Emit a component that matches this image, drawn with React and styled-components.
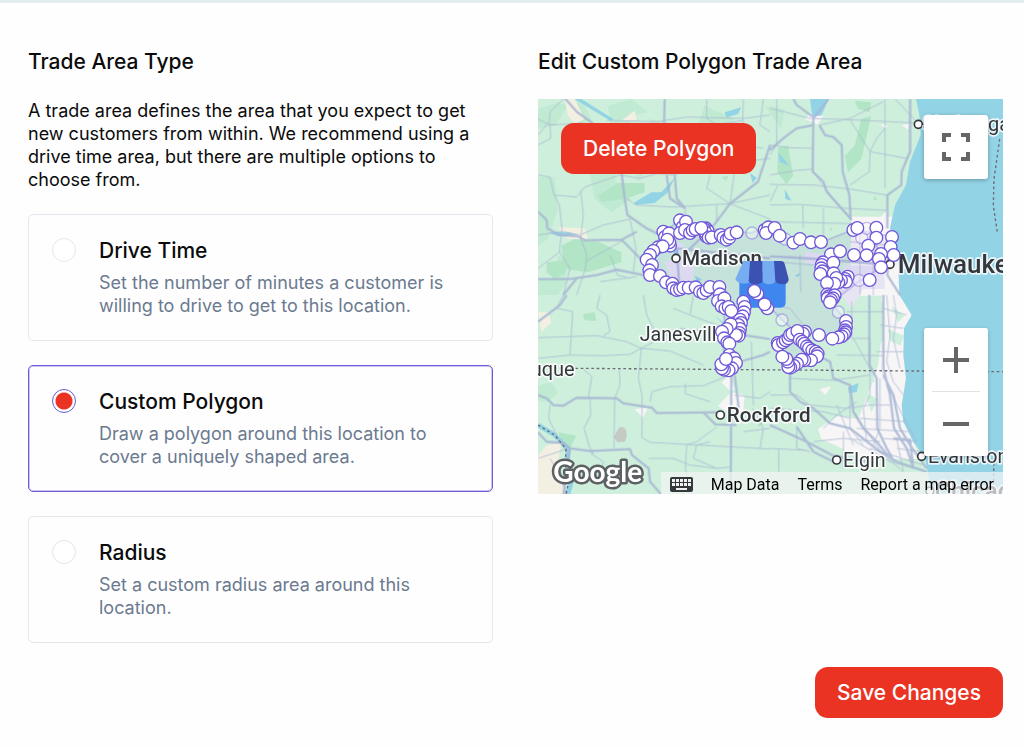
import React, { useState } from "react";
import styled, { createGlobalStyle } from "styled-components";

const GlobalStyle = createGlobalStyle`
  *, *::before, *::after { box-sizing: border-box; }
  body {
    margin: 0;
    background: #fefefe;
    color: #0b0b0c;
    font-family: Inter, "Open Sans", sans-serif;
  }
  button, input { font: inherit; }
`;

const Page = styled.main`
  border-top: 3px solid #e4edf0;
  padding: 44px 21px 30px 28px;
`;

const Columns = styled.div`
  display: grid;
  grid-template-columns: 1fr 1fr;
  gap: 45px;
`;

const Column = styled.section`
  min-width: 0;
`;

const Heading = styled.h2`
  margin: 0 0 22px;
  font-size: 21px;
  font-weight: 500;
  line-height: 30px;
`;

const Intro = styled.p`
  margin: 0 0 23px;
  font-size: 18px;
  line-height: 23px;
`;

const Options = styled.div`
  display: flex;
  flex-direction: column;
  gap: 24px;
`;

const OptionCard = styled.label`
  display: flex;
  align-items: flex-start;
  gap: 23px;
  padding: 23px;
  border: 1px solid ${(p) => (p.$selected ? "#6f5bd6" : "#e3e8ef")};
  box-shadow: ${(p) => (p.$selected ? "inset 0 0 0 1px #cdc5f1" : "none")};
  border-radius: 5px;
  cursor: pointer;
`;

const Radio = styled.input`
  appearance: none;
  flex: none;
  width: 24px;
  height: 24px;
  margin: 0;
  border: 1px solid #e3e8ef;
  border-radius: 50%;
  background: #fff;
  &:checked {
    border-color: #6f5bd6;
    background: radial-gradient(circle, #ea3323 0 8px, #fff 9px);
  }
`;

const OptionBody = styled.span`
  display: block;
`;

const OptionTitle = styled.span`
  display: block;
  margin-bottom: 7px;
  font-size: 21px;
  font-weight: 500;
  line-height: 26px;
`;

const OptionText = styled.span`
  display: block;
  color: #6b7a90;
  font-size: 18px;
  line-height: 23px;
`;

const Button = styled.button`
  height: 51px;
  padding: 0 22px;
  border: 0;
  border-radius: 13px;
  background: #ea3323;
  color: #fff;
  font-size: 21px;
  font-weight: 500;
  cursor: pointer;
`;

const Actions = styled.div`
  display: flex;
  justify-content: flex-end;
  margin-top: 24px;
`;

const MapFrame = styled.div`
  position: relative;
  height: 395px;
  overflow: hidden;
  background: #ceefdc;
  font-family: Roboto, sans-serif;
`;

const MapSvg = styled.svg`
  display: block;
  width: 100%;
  height: 100%;
`;

const DeleteSlot = styled.div`
  position: absolute;
  top: 24px;
  left: 23px;
  font-family: Inter, "Open Sans", sans-serif;
`;

const MapControl = styled.button`
  display: grid;
  place-items: center;
  width: 64px;
  height: 64px;
  padding: 0;
  border: 0;
  border-radius: 3px;
  background: #fff;
  cursor: pointer;
`;

const FullscreenSlot = styled.div`
  position: absolute;
  top: 16px;
  right: 15px;
  border-radius: 3px;
  box-shadow: 0 1px 4px rgba(0, 0, 0, 0.3);
`;

const ZoomSlot = styled.div`
  position: absolute;
  right: 15px;
  bottom: 38px;
  border-radius: 3px;
  background: #fff;
  box-shadow: 0 1px 4px rgba(0, 0, 0, 0.2);
`;

const Divider = styled.div`
  height: 1px;
  margin: -1px 8px 0;
  background: #e2e2e2;
`;

const MapFooter = styled.div`
  position: absolute;
  right: 0;
  bottom: 0;
  display: flex;
  align-items: center;
  height: 22px;
  padding-top: 2px;
  background: rgba(245, 245, 245, 0.7);
  color: #000;
  font-size: 16px;
`;

const FooterButton = styled.button`
  display: flex;
  align-items: center;
  height: 20px;
  padding: 0 9px;
  border: 0;
  background: none;
  color: inherit;
  white-space: nowrap;
  cursor: pointer;
`;

const FooterLink = styled.a`
  padding: 0 9px;
  color: inherit;
  text-decoration: none;
  white-space: nowrap;
`;

const options = [
  {
    id: "drive",
    title: "Drive Time",
    text: "Set the number of minutes a customer is willing to drive to get to this location.",
  },
  {
    id: "polygon",
    title: "Custom Polygon",
    text: "Draw a polygon around this location to cover a uniquely shaped area.",
  },
  {
    id: "radius",
    title: "Radius",
    text: "Set a custom radius area around this location.",
  },
];

/* Polygon vertices, west part, as map units from (276, 318). */
const westVertices = [
  [228, 70], [233, 78], [226, 86], [229, 94], [100, 80], [105, 96], [117, 85],
  [120, 122], [118, 112], [112, 104], [150, 46], [158, 66], [168, 50], [150, 84],
  [165, 75], [180, 84], [188, 76], [197, 72], [222, 72], [226, 82], [214, 69], [236, 98], [245, 97],
  [272, 90], [280, 98], [290, 104], [298, 98], [302, 86], [320, 82],
  [84, 127], [98, 124], [70, 138], [60, 150], [50, 164], [66, 180], [58, 196],
  [60, 210], [90, 213], [108, 232], [127, 236], [130, 250], [140, 255], [150, 253],
  [160, 248], [176, 248], [197, 247], [210, 260], [220, 264], [230, 256],
  [240, 246], [268, 246], [270, 268], [264, 288], [283, 280], [275, 304],
  [286, 310], [296, 306], [304, 318], [372, 258], [382, 266], [340, 290],
  [344, 306], [412, 310], [404, 298], [342, 322], [338, 334], [330, 344],
  [333, 354], [325, 360], [330, 372], [328, 384], [326, 392], [318, 390],
  [302, 358], [290, 372], [276, 380], [282, 400], [292, 412], [298, 416],
  [298, 450], [312, 460], [318, 474], [306, 490], [296, 496], [282, 494],
  [276, 490], [274, 478], [288, 462],
  [373, 258], [404, 75], [415, 67], [408, 84], [434, 69], [449, 92],
];

/* East part, as map units from (681, 318). */
const eastVertices = [
  [85, 113], [105, 102], [138, 112], [168, 111], [265, 75], [277, 69],
  [334, 68], [334, 98], [381, 96], [377, 126], [310, 122], [305, 151],
  [267, 150], [198, 148], [225, 139], [386, 150], [348, 147], [342, 162],
  [348, 187], [314, 225], [174, 172], [170, 180], [169, 190], [172, 199],
  [205, 173], [166, 207], [206, 205], [248, 215], [240, 222], [243, 230],
  [228, 226], [220, 232], [214, 219], [208, 236], [186, 234],
  [187, 268], [191, 274], [188, 280], [209, 271], [204, 280], [198, 285],
  [195, 292], [243, 348], [243, 366], [240, 376], [241, 382], [237, 388],
  [230, 394], [220, 397], [202, 401], [162, 390], [38, 414], [40, 420],
  [54, 412], [62, 406], [70, 400], [75, 390], [82, 386], [120, 380],
  [114, 386], [97, 378], [104, 404], [112, 410], [118, 416], [126, 424],
  [132, 430], [142, 436], [152, 440], [158, 446], [156, 454], [138, 466],
  [118, 466], [110, 464], [96, 476], [86, 482], [76, 488], [70, 486],
  [68, 470], [64, 462], [52, 455],
];

const ghostVertices = [[366, 84, 276], [456, 345, 276], [220, 321, 681], [282, 226, 681], [290, 98, 681], [305, 70, 681], [60, 102, 681]];

const Vertex = ({ x, y }) => (
  <circle cx={x} cy={y} r="19" fill="#fff" stroke="#6f57d8" strokeWidth="4" />
);

const roadsMinor = {
  nw: "M24 120L58 80 60 50 100 12M0 60L60 90 160 84M60 84L62 130 24 150M230 76L380 80 470 66 640 70 720 60M530 12V70L560 90 640 76M640 12L636 150 700 160M24 240L60 246 72 300 88 330 96 400 88 470 120 520 100 600M72 300L140 306 164 276 270 240 330 250M152 285L160 360 152 430 170 480 166 520 140 600M24 420L100 410 150 420 220 390 300 372M90 470L24 520M330 250L380 236 440 240M288 310L320 330 430 336 600 326 720 300M430 240L470 180 510 160 530 90M540 240L530 280 600 326M600 326L612 240 640 200 720 190M600 326L720 372M300 372L318 460 310 530M166 500L280 436M466 340L464 400M240 480L262 540 300 550M210 560L320 545M560 380L560 330M700 12L690 90 720 110",
  ne: "M0 40L120 70 240 74 440 84M20 12V150L0 180M0 150L60 158 130 160M150 90L240 70 340 20M345 12V280M240 74L300 170 410 190M340 100L345 100 320 130 300 170 298 230 240 270M130 222L80 226 0 240M0 268L130 270 240 282 350 300M24 270L0 320M130 230L180 300 245 375M0 330L90 328 230 340 350 346M98 330L100 400M160 340V440M375 12L440 80M0 380L250 386M240 440L350 450M180 470L240 480 350 500M90 480L92 590M10 500L130 510M270 400V600M310 390V600",
  sw: "M100 0L80 40 128 50 120 178M24 128L200 122 290 140 334 160M210 0L200 40 230 60 240 110 220 122M340 0L350 60 380 120M334 160L450 100 540 110M334 160L300 178 220 182 120 180 24 190M334 160L420 168 520 210M334 160L325 250 336 300V430M268 224L270 270 254 310 252 460M160 222L185 245 175 310M180 310L182 360 162 400 186 480M60 330L56 370 80 420 110 470M360 320L366 290 420 275 520 272 600 240M466 265V296L540 320M560 396L500 440 470 450 466 520 480 600M340 430L360 442 720 462M356 490L430 490 480 510 560 520M186 462L190 480 220 500 215 540 260 580M110 462L24 490M664 140L670 330M614 300L690 310 720 290M540 440L500 450 490 490 560 520 600 516M490 0L480 60 560 90M430 40L480 60M668 340L700 400 690 460M720 400L640 410M60 490L90 540",
  se: "M0 30L60 40 100 90M245 20V130L300 130M230 50L340 50M250 130L300 220M200 180L340 182M60 250L190 256 300 240M0 300L80 300 120 330 230 340 300 330 360 330M0 340L160 350 240 370M80 395V460L120 470M26 460V530M0 460L110 466M130 440L220 430 330 440M160 400L200 360 260 320M220 410L220 520M300 140L300 300 280 340 290 440M240 290L240 400 280 450M270 370L410 380M260 400L420 410M330 250V400L310 450M350 0L360 120 350 200 370 260 400 300M370 0L380 60 370 130 390 220M330 90L400 100M340 40L410 60M320 170L400 170M380 430L400 530M340 430L440 440M380 460L450 470M250 350L340 480 400 530M200 330L250 450M240 430L360 500 470 530M300 460L460 510M350 270L440 440",
};

const roadsMajor = {
  nw: "M96 0L140 50 190 86M404 12L402 90M24 350L50 375 52 400 90 420 145 424 165 436 275 434 320 410M275 236L284 310 292 360 350 400 390 420M410 240L420 310 466 340M434 240L440 310 466 340M720 150L684 260 600 326 548 395 470 470M24 552L120 552 200 540 260 524 340 540M140 550L100 600M275 434L340 500 350 540M440 460L720 490M440 460L450 600",
  ne: "M70 12L80 30 130 66M175 12L130 70M130 70L128 230 160 260 170 290 245 375M148 90L165 120 190 126 215 150 218 230 238 300 242 375M130 90L80 100 40 130 0 165M420 12L420 170 395 230 394 270 352 300V400M0 484L80 488 170 494 370 510M300 400L330 480M360 420L352 540 390 600",
  sw: "M110 0L90 30 24 80M24 300L50 310 70 330 100 332 140 308 260 310 280 325 366 338 380 354 560 352M520 352L556 388 620 390M604 220L602 600M614 240L626 340M24 412L50 440 100 444 120 460 180 468 300 462 306 480 356 520 360 560 395 600M640 120L720 132M604 240L630 200 700 180 720 170M120 460L100 600M80 500L110 600",
  se: "M60 240V290L90 320 130 340 180 385 240 400 330 470 380 500 470 530M0 390L110 440 185 480 290 500M80 395L130 470 190 500M120 170L180 200 190 250 240 270 250 350 280 400 320 440 360 490M298 0V210L320 250 322 400 350 460 372 500M340 0V220L360 300 372 400 410 460 430 520M340 240L370 300 390 400 420 450 470 520M370 430L420 434 430 520",
};

const patches = "M0 30L60 10 90 20 50 80 0 90ZM150 200L250 190 230 240 280 300 220 340 170 300ZM90 0L130 0 160 60 130 90ZM0 235L50 235 60 330 30 420 0 440ZM210 20L280 0 330 40 280 50 260 110 220 90ZM500 20L590 60 560 110 480 80ZM280 190L340 200 300 250ZM60 470L90 480 80 560 40 550ZM330 60L450 80 470 190 400 210ZM0 540L90 545 60 588 0 588ZM680 20L740 30 730 90ZM0 860L40 850 60 880 30 910 0 905Z";
const woods = "M180 290L240 252 320 252 320 280 260 300 190 308ZM70 440L110 420 180 428 250 460 250 490 150 520 80 510ZM26 490L80 484 84 520 50 540 25 520ZM720 145L750 140 766 230 745 255 718 220ZM970 60L1000 50 970 180 930 220 920 170 950 140ZM950 5L1000 10 994 40 960 30ZM550 235L570 230 566 245ZM1010 290L1018 302H1005ZM875 385L885 390 878 396ZM135 645L170 640 175 666 140 664ZM1050 770L1090 780 1060 815ZM940 725L970 735 960 750 935 740ZM60 1000L115 1010 90 1060ZM660 930L700 960 660 985ZM905 970L940 990 915 1035 900 1000Z";
const sand = "M80 0L110 0 140 60 110 74 90 50ZM250 65L290 35 296 62 260 66ZM60 385L140 388 150 420 90 420ZM0 640L30 640 40 670 10 700ZM24 1040L70 1030 60 1090 84 1185H0V1070Z";
const water = "M290 310L340 280 370 280 410 236 390 280 350 312 290 318ZM560 40L610 25 600 45 565 55ZM636 222L656 236 644 252ZM130 0L226 60 218 66 110 0ZM816 0H872L850 50 822 50ZM720 160L755 200 726 190ZM740 270L760 305 742 300ZM930 865L962 852 956 880 932 882ZM30 400H90L120 408 60 412ZM410 440L420 450 424 480 405 460ZM470 530L490 540 480 560ZM770 530L790 520 780 534ZM530 650L570 680 550 670Z";
const urban = "M940 353H1030L1050 330V353H1076V448L1090 588 1121 648 1100 700 1104 838 1096 968 1150 1080H980L850 1020 840 990 900 950 960 960 1000 860 1020 800 1030 720V590H936ZM800 60L830 30 856 50 840 76ZM1028 75L1050 80 1040 90ZM1090 78L1116 75 1110 92ZM575 830L590 870 580 880 550 850ZM580 878L620 890 616 940 560 935 540 920ZM290 930L330 926 315 956ZM845 870L880 862 862 888Z";
const parks = "M940 610H1035V720H940ZM936 715L990 740 1010 850 930 840ZM1050 690L1098 710 1088 740 1056 725ZM1060 620L1100 650 1080 670ZM1000 640L1040 720 1000 760ZM980 880L1020 900 1000 940ZM940 1060L980 1080 930 1100Z";
const murk = "M430 470L470 490 460 570 400 540 380 490ZM400 420L440 440 420 470ZM800 458L880 470 850 500 800 490ZM920 500H1040V570H900ZM900 570L980 560 940 630Z";
const tradeArea = "M384 400L420 364 500 388 640 402 680 385 770 428 850 430 950 390 1055 412 1066 470 1030 505 960 550 880 610 924 666 900 712 843 708 800 700 735 732 735 770 765 803 830 765 790 715 732 662 648 576 600 660 580 740 560 800 556 740 560 620 500 565 390 550 336 520 330 480Z";

const Label = ({ x, y, size, weight = 500, anchor = "start", children }) => (
  <text
    x={x}
    y={y}
    fontSize={size}
    fontWeight={weight}
    textAnchor={anchor}
    fill="#35373c"
    stroke="#fff"
    strokeWidth="10"
    strokeLinejoin="round"
    strokeOpacity="0.8"
    paintOrder="stroke"
  >
    {children}
  </text>
);

const Roads = ({ d, ...rest }) => (
  <g fill="none" stroke="#a7b6d3" strokeLinejoin="round" {...rest}>
    <path d={d.nw} transform="translate(-24 -12)" />
    <path d={d.ne} transform="translate(696 -12)" />
    <path d={d.sw} transform="translate(-24 588)" />
    <path d={d.se} transform="translate(696 588)" />
  </g>
);

const towns = [[414, 478], [1141, 76], [547, 948], [896, 1083], [1151, 1072], [1056, 496], [1176, 1176]];

function TradeMap() {
  return (
    <MapSvg
      viewBox="0 0 1395 1185"
      preserveAspectRatio="xMidYMid slice"
      role="img"
      aria-label="Map of the trade area"
    >
      <path d="M0 0H1395V1185H0Z" fill="#ceefdc" />
      <path d={patches} fill="#c1ead2" />
      <path d={woods} fill="#b2e5c6" />
      <path d={sand} fill="#f3efe2" />
      <path d={urban} fill="#f7f5f6" />
      <path d={parks} fill="#ceefdc" />
      <path d={murk} fill="#e7e4f4" />
      <path d={water} fill="#92d3e6" />
      <path d="M0 978L50 1008 90 1050 88 1100 100 1150 90 1185" fill="none" stroke="#92d3e6" strokeWidth="14" />
      <path
        d="M1134 0L1144 48 1148 108 1116 188 1104 258 1071 318 1056 388 1076 448 1081 508 1084 588 1121 648 1098 688 1096 768 1104 838 1091 918 1096 968 1126 1028 1161 1078 1171 1128 1180 1185H1395V0Z"
        fill="#92d3e6"
      />
      <path d="M242 988a15 24 0 0 1 18 40l-22 2-10-16Z" fill="#c5cbc3" />
      <Roads d={roadsMinor} strokeWidth="3" opacity="0.75" />
      <Roads d={roadsMajor} strokeWidth="7" opacity="0.85" />
      <path
        d="M0 807L1395 818M1385 120L1368 240 1366 320 1378 400M0 978L50 1008 84 1050 82 1100 92 1150 84 1185M1368 1060L1366 1185"
        fill="none"
        stroke="#6b6b73"
        strokeWidth="4"
        strokeDasharray="8 8"
      />
      <path d={tradeArea} fill="#6f57d8" fillOpacity="0.08" stroke="#6f57d8" strokeOpacity="0.25" strokeWidth="6" />

      {towns.map(([x, y]) => (
        <circle key={`${x}-${y}`} cx={x} cy={y} r="12" fill="#fff" stroke="#35373c" strokeWidth="5" />
      ))}
      <Label x={432} y={497} size={62}>Madison</Label>
      <Label x={1079} y={522} size={78}>Milwaukee</Label>
      <Label x={305} y={726} size={59} weight={400}>Janesville</Label>
      <Label x={110} y={832} size={60} weight={400} anchor="end">Dubuque</Label>
      <Label x={566} y={970} size={62}>Rockford</Label>
      <Label x={915} y={1104} size={59} weight={400}>Elgin</Label>
      <Label x={1170} y={1092} size={59} weight={400}>Evanston</Label>
      <Label x={1154} y={96} size={60} weight={400}>Sheboygan</Label>
      <Label x={1190} y={1202} size={75}>Chicago</Label>

      <g>
        <path d="M604 520H743V610q0 16-16 16H620q-16 0-16-16Z" fill="#3f87ee" />
        <path d="M616 486h24v58q-2 10-22 10-20 0-26-14Z" fill="#76acf2" />
        <path d="M636 486h38v60q-4 10-21 10t-21-10Z" fill="#3b52b2" />
        <path d="M674 486h38v60q-4 10-19 10t-19-10Z" fill="#76acf2" />
        <path d="M708 486h22q8 0 10 8l12 46q0 16-18 16-20 0-22-12Z" fill="#3b52b2" />
      </g>

      {ghostVertices.map(([x, y, dx]) => (
        <circle key={`${x}-${y}`} cx={x + dx} cy={y + 318} r="18" fill="#fff" fillOpacity="0.4" stroke="#6f57d8" strokeOpacity="0.4" strokeWidth="4" />
      ))}
      <g transform="translate(276 318)">
        {westVertices.map(([x, y], i) => <Vertex key={i} x={x} y={y} />)}
      </g>
      <g transform="translate(681 318)">
        {eastVertices.map(([x, y], i) => <Vertex key={i} x={x} y={y} />)}
      </g>

      <text
        x="46"
        y="1148"
        fontFamily="Lato, sans-serif"
        fontSize="84"
        fontWeight="700"
        fill="#fff"
        stroke="#5d6163"
        strokeWidth="15"
        strokeLinejoin="round"
        paintOrder="stroke"
      >
        Google
      </text>
    </MapSvg>
  );
}

const Keyboard = () => (
  <svg width="23" height="15" viewBox="0 0 23 15" aria-hidden="true">
    <rect width="23" height="15" rx="2" fill="#35373a" />
    <path
      d="M2 2h3v3H2zM6 2h3v3H6zM10 2h3v3h-3zM14 2h3v3h-3zM18 2h3v3h-3zM2 6h3v3H2zM6 6h3v3H6zM10 6h3v3h-3zM14 6h3v3h-3zM18 6h3v3h-3zM6 11h11v2H6z"
      fill="#eef3f1"
    />
  </svg>
);

export default function App() {
  const [selected, setSelected] = useState("polygon");
  return (
    <>
      <GlobalStyle />
      <Page>
        <Columns>
          <Column>
            <Heading>Trade Area Type</Heading>
            <Intro>
              A trade area defines the area that you expect to get new customers from within. We
              recommend using a drive time area, but there are multiple options to choose from.
            </Intro>
            <Options role="radiogroup" aria-label="Trade Area Type">
              {options.map((o) => (
                <OptionCard key={o.id} htmlFor={o.id} $selected={selected === o.id}>
                  <Radio
                    type="radio"
                    id={o.id}
                    name="trade-area"
                    checked={selected === o.id}
                    onChange={() => setSelected(o.id)}
                  />
                  <OptionBody>
                    <OptionTitle>{o.title}</OptionTitle>
                    <OptionText>{o.text}</OptionText>
                  </OptionBody>
                </OptionCard>
              ))}
            </Options>
          </Column>
          <Column>
            <Heading>Edit Custom Polygon Trade Area</Heading>
            <MapFrame>
              <TradeMap />
              <DeleteSlot>
                <Button type="button">Delete Polygon</Button>
              </DeleteSlot>
              <FullscreenSlot>
                <MapControl type="button" aria-label="Toggle fullscreen view">
                  <svg width="30" height="30" viewBox="0 0 30 30" fill="none" stroke="#666" strokeWidth="4" aria-hidden="true">
                    <path d="M3 10V3H10M20 3H27V10M27 20V27H20M10 27H3V20" />
                  </svg>
                </MapControl>
              </FullscreenSlot>
              <ZoomSlot>
                <MapControl type="button" aria-label="Zoom in">
                  <svg width="28" height="28" viewBox="0 0 28 28" fill="none" stroke="#666" strokeWidth="4" aria-hidden="true">
                    <path d="M14 1V27M1 14H27" />
                  </svg>
                </MapControl>
                <Divider />
                <MapControl type="button" aria-label="Zoom out">
                  <svg width="28" height="28" viewBox="0 0 28 28" fill="none" stroke="#666" strokeWidth="4" aria-hidden="true">
                    <path d="M1 14H27" />
                  </svg>
                </MapControl>
              </ZoomSlot>
              <MapFooter>
                <FooterButton type="button" aria-label="Keyboard shortcuts">
                  <Keyboard />
                </FooterButton>
                <FooterButton type="button">Map Data</FooterButton>
                <FooterLink href="#terms">Terms</FooterLink>
                <FooterLink href="#report">Report a map error</FooterLink>
              </MapFooter>
            </MapFrame>
          </Column>
        </Columns>
        <Actions>
          <Button type="button">Save Changes</Button>
        </Actions>
      </Page>
    </>
  );
}
